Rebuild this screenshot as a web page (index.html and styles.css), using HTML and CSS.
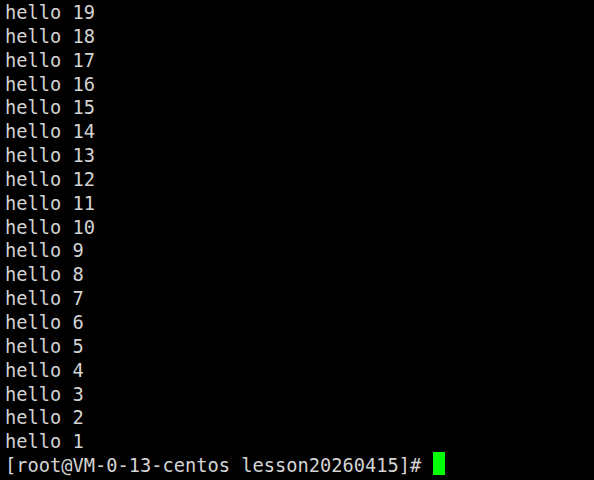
FILE: index.html
```html
<!DOCTYPE html>
<html>
<head>
<meta charset="utf-8">
<link rel="stylesheet" href="styles.css">
</head>
<body>
<pre class="term"><span class="line">hello 19</span>
<span class="line">hello 18</span>
<span class="line">hello 17</span>
<span class="line">hello 16</span>
<span class="line">hello 15</span>
<span class="line">hello 14</span>
<span class="line">hello 13</span>
<span class="line">hello 12</span>
<span class="line">hello 11</span>
<span class="line">hello 10</span>
<span class="line">hello 9</span>
<span class="line">hello 8</span>
<span class="line">hello 7</span>
<span class="line">hello 6</span>
<span class="line">hello 5</span>
<span class="line">hello 4</span>
<span class="line">hello 3</span>
<span class="line">hello 2</span>
<span class="line">hello 1</span>
<span class="line">[root@VM-0-13-centos lesson20260415]# <span class="cursor"></span></span></pre>
</body>
</html>
```
FILE: styles.css
```css
html, body {
  margin: 0;
  padding: 0;
  background: #000;
  width: 594px;
  height: 480px;
  overflow: hidden;
}
.term {
  margin: 0;
  padding: 1px 0 0 5px;
  font-family: "DejaVu Sans Mono", monospace;
  font-size: 18.7px;
  line-height: 23.85px;
  color: #d4d4d4;
  white-space: pre;
}
.line {
  display: inline;
}
.cursor {
  display: inline-block;
  width: 12px;
  height: 23px;
  margin-top: -3px;
  background: #00ff00;
  vertical-align: -3px;
}
```
